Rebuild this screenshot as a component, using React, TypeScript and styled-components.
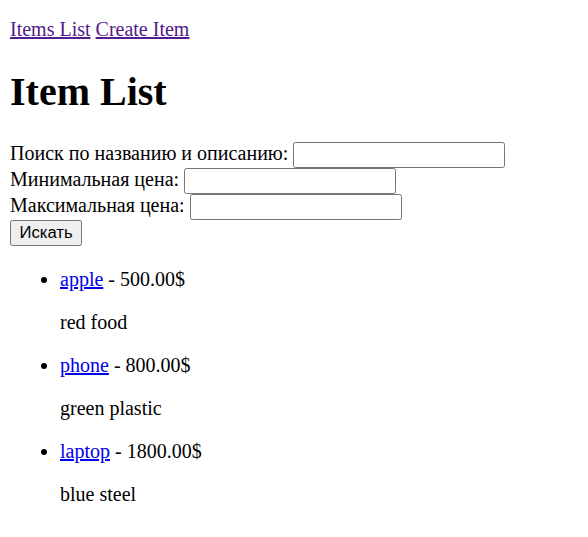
import * as React from 'react';
import styled, { createGlobalStyle } from 'styled-components';

// page was captured at 125% zoom, so the browser defaults are scaled by 1.25 here
const GlobalStyle = createGlobalStyle`
  body {
    margin: 10px;
    font-family: "Liberation Serif", "Times New Roman", serif;
    font-size: 20px;
    color: #000;
    background: #fff;
  }
`;

type Item = {
  id: number;
  name: string;
  price: number;
  description: string;
};

const items: Item[] = [
  { id: 1, name: 'apple', price: 500, description: 'red food' },
  { id: 2, name: 'phone', price: 800, description: 'green plastic' },
  { id: 3, name: 'laptop', price: 1800, description: 'blue steel' },
];

const Nav = styled.nav`
  margin: 8px 0 0;
`;

const NavLink = styled.a`
  color: #551a8b;
  text-decoration: underline;
`;

const Title = styled.h1`
  font-size: 40px;
  font-weight: bold;
  margin: 26.8px 0;
`;

const SearchForm = styled.form`
  margin: 0;
`;

const Field = styled.input`
  box-sizing: border-box;
  width: 212px;
  height: 26px;
  padding: 1px 2.5px;
  border: 1px solid #767676;
  border-radius: 2.5px;
  font-family: "Liberation Sans", Arial, sans-serif;
  font-size: 16.67px;
  background: #fff;
  vertical-align: baseline;
`;

const SubmitButton = styled.button`
  box-sizing: border-box;
  height: 26px;
  padding: 1px 8.5px;
  border: 1px solid #767676;
  border-radius: 2.5px;
  background: #efefef;
  color: #000;
  font-family: "Liberation Sans", Arial, sans-serif;
  font-size: 16.67px;
`;

const List = styled.ul`
  margin: 22px 0 20px;
  padding-left: 50px;
  list-style: disc;
`;

const ItemLink = styled.a`
  color: #0000ee;
  text-decoration: underline;
`;

const Description = styled.p`
  margin: 20px 0;
`;

export default function App() {
  return (
    <>
      <GlobalStyle />
      <Nav>
        <NavLink href="#">Items List</NavLink> <NavLink href="#">Create Item</NavLink>
      </Nav>
      <Title>Item List</Title>
      <SearchForm onSubmit={(e) => e.preventDefault()}>
        <label>
          Поиск по названию и описанию: <Field type="text" />
        </label>
        <br />
        <label>
          Минимальная цена: <Field type="text" />
        </label>
        <br />
        <label>
          Максимальная цена: <Field type="text" />
        </label>
        <br />
        <SubmitButton type="submit">Искать</SubmitButton>
      </SearchForm>
      <List>
        {items.map((item) => (
          <li key={item.id}>
            <ItemLink href="#">{item.name}</ItemLink> - {item.price.toFixed(2)}$
            <Description>{item.description}</Description>
          </li>
        ))}
      </List>
    </>
  );
}
